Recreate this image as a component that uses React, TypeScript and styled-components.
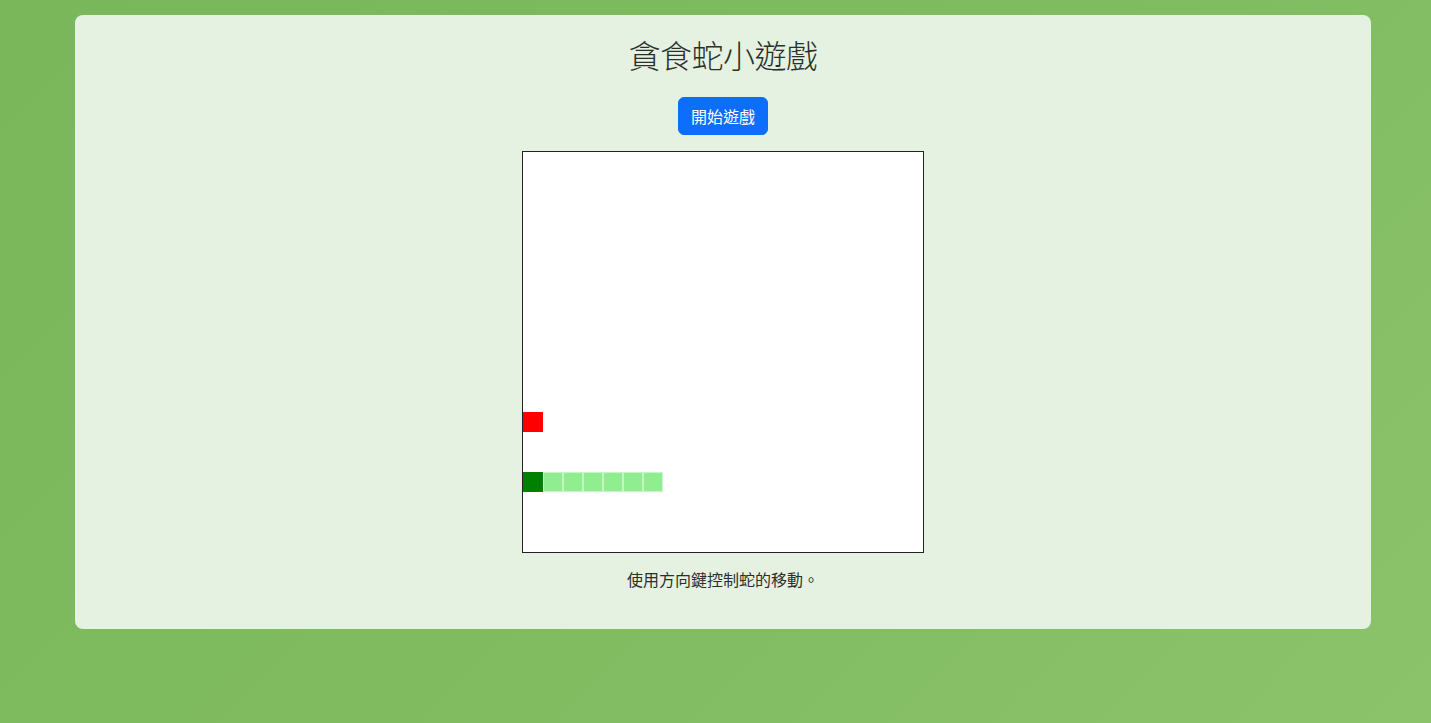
import styled, { createGlobalStyle } from 'styled-components';

const GlobalStyle = createGlobalStyle`
  html, body {
    margin: 0;
    padding: 0;
  }
  body {
    min-height: 723px;
    background: linear-gradient(135deg, #79b75a 0%, #80bb60 50%, #8bc36b 100%);
    font-family: "Noto Sans", "Noto Sans CJK TC", sans-serif;
    color: #212529;
  }
`;

const Page = styled.div`
  padding-top: 15px;
  padding-left: 75px;
`;

const Card = styled.main`
  width: 1296px;
  box-sizing: border-box;
  padding: 20px;
  background: #e5f1e1;
  border-radius: 8px;
  text-align: center;
`;

const Title = styled.h2`
  margin: 0 0 8px;
  font-family: "Noto Sans CJK TC", sans-serif;
  font-size: 32px;
  font-weight: 300;
  line-height: 1.2;
  color: #2b2f2c;
  letter-spacing: -0.5px;
`;

const Controls = styled.div`
  margin-top: 24px;
`;

const StartButton = styled.button`
  height: 38px;
  padding: 0 12px;
  border: 1px solid #0d6efd;
  border-radius: 6px;
  background: #0d6efd;
  color: #fff;
  font-family: "Noto Sans CJK TC", sans-serif;
  font-size: 16px;
  line-height: 1;
  cursor: pointer;
`;

const Board = styled.svg`
  display: block;
  margin: 16px auto 0;
  border: 1px solid #222;
  background: #fff;
`;

const Hint = styled.p`
  margin: 14px 0 18px;
  font-family: "Noto Sans CJK TC", sans-serif;
  font-size: 16px;
  line-height: 24px;
  color: #2b2f2c;
`;

const CELL = 20;
const food = { x: 0, y: 13 };
const snake = [0, 1, 2, 3, 4, 5, 6].map((x) => ({ x, y: 16 }));

export default function App() {
  return (
    <>
      <GlobalStyle />
      <Page>
        <Card>
          <Title>貪食蛇小遊戲</Title>
          <Controls>
            <StartButton type="button">開始遊戲</StartButton>
          </Controls>
          <Board width={400} height={400} viewBox="0 0 400 400">
            <rect x={food.x * CELL} y={food.y * CELL} width={CELL} height={CELL} fill="#ff0000" />
            {snake.map((s, i) => (
              <rect
                key={i}
                x={s.x * CELL + 0.5}
                y={s.y * CELL + 0.5}
                width={CELL - 1}
                height={CELL - 1}
                fill={i === 0 ? '#008000' : '#90ee90'}
                stroke={i === 0 ? '#0a7a0a' : '#c8f5c8'}
                strokeWidth={1}
              />
            ))}
          </Board>
          <Hint>使用方向鍵控制蛇的移動。</Hint>
        </Card>
      </Page>
    </>
  );
}
